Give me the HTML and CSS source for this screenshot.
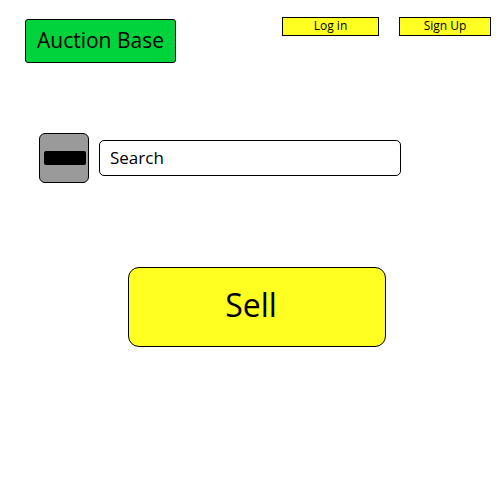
FILE: index.html
```html
<!DOCTYPE html>
<html>
<head>
<meta charset="utf-8">
<link rel="stylesheet" href="styles.css">
</head>
<body>
<header class="top">
  <div class="logo">Auction Base</div>
  <nav class="auth">
    <a class="auth-btn login">Log in</a>
    <a class="auth-btn signup">Sign Up</a>
  </nav>
</header>
<section class="search-row">
  <button class="menu-btn"><span class="bar"></span></button>
  <div class="search">Search</div>
</section>
<section class="sell-row">
  <button class="sell">Sell</button>
</section>
</body>
</html>
```
FILE: styles.css
```css
html, body {
  margin: 0;
  padding: 0;
  background: #fff;
  font-family: "Open Sans", "Noto Sans", sans-serif;
  color: #000;
}
.top {
  display: flex;
  align-items: flex-start;
  padding: 17px 9px 0 25px;
}
.logo {
  box-sizing: border-box;
  width: 151px;
  height: 44px;
  margin-top: 2px;
  background: #00d33c;
  border: 1px solid #000;
  border-radius: 3px;
  font-size: 21px;
  line-height: 40px;
  text-align: center;
}
.auth {
  display: flex;
  gap: 20px;
  margin-left: auto;
}
.auth-btn {
  box-sizing: border-box;
  height: 19px;
  background: #ffff22;
  border: 1px solid #000;
  font-size: 12px;
  line-height: 16px;
  text-align: center;
}
.login { width: 97px; }
.signup { width: 92px; }
.search-row {
  display: flex;
  align-items: center;
  gap: 10px;
  margin: 70px 0 0 39px;
}
.menu-btn {
  box-sizing: border-box;
  width: 50px;
  height: 50px;
  padding: 0 2px 0 4px;
  background: #9a9a9a;
  border: 1px solid #000;
  border-radius: 6px;
  display: flex;
  align-items: center;
}
.bar {
  display: block;
  width: 43px;
  height: 14px;
  background: #000;
  border-radius: 2px;
}
.search {
  box-sizing: border-box;
  width: 302px;
  height: 36px;
  border: 1px solid #000;
  border-radius: 5px;
  padding-left: 10px;
  font-size: 17px;
  line-height: 33px;
}
.sell-row {
  padding: 84px 0 0 128px;
}
.sell {
  box-sizing: border-box;
  width: 258px;
  height: 80px;
  background: #ffff22;
  border: 1px solid #000;
  border-radius: 11px;
  font-family: "Open Sans", "Noto Sans", sans-serif;
  font-size: 32px;
  line-height: 1;
  color: #000;
  padding: 0 12px 4px 0;
}
```
